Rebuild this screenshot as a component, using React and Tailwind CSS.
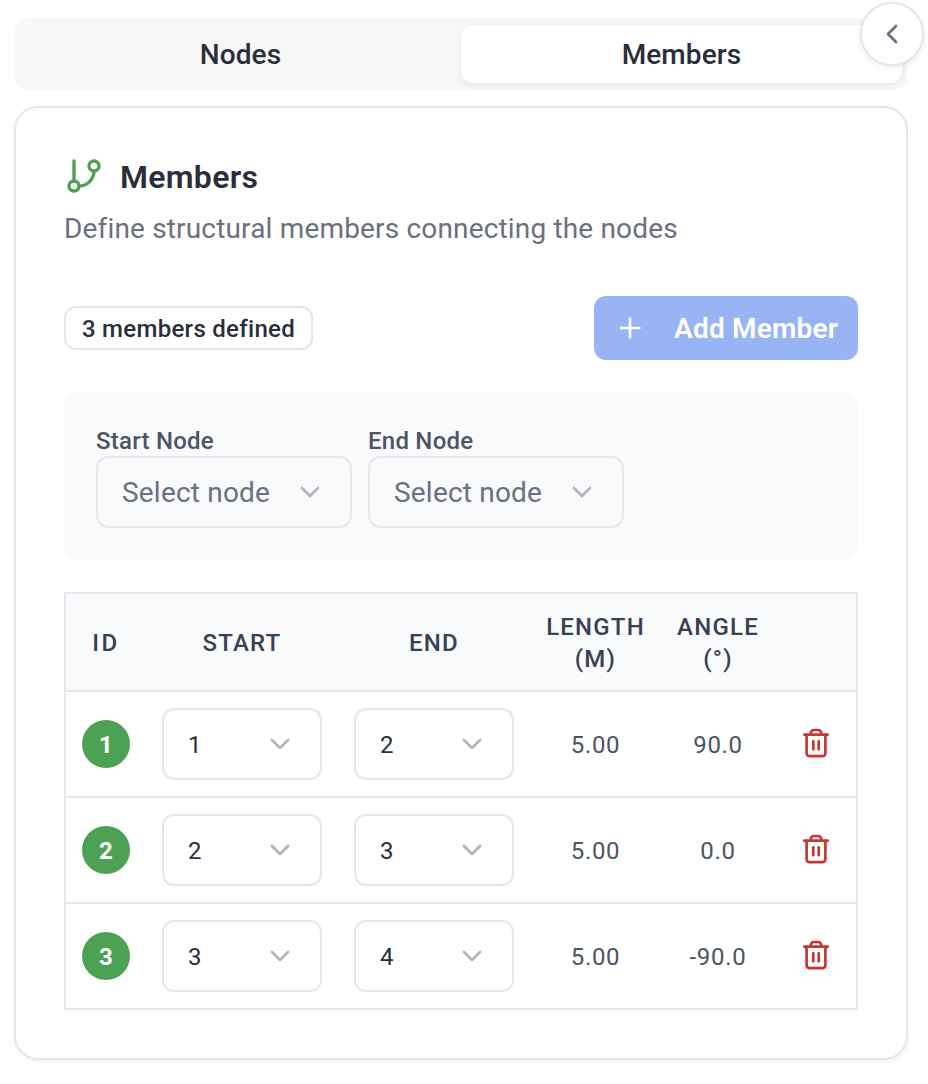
import { ChevronDown, ChevronLeft, GitBranch, Plus } from "lucide-react";

const members = [
  { id: 1, start: 1, end: 2, length: "5.00", angle: "90.0" },
  { id: 2, start: 2, end: 3, length: "5.00", angle: "0.0" },
  { id: 3, start: 3, end: 4, length: "5.00", angle: "-90.0" },
];

function TrashIcon() {
  return (
    <svg className="ml-px" width="32" height="32" viewBox="0 0 32 32" fill="none" stroke="#c93430" strokeWidth="2.67" strokeLinecap="round" strokeLinejoin="round">
      <path d="M4.3 6.7h23.4" />
      <path d="M10.8 6.4V5a3 3 0 0 1 3-3h4.4a3 3 0 0 1 3 3v1.4" />
      <path d="M6.6 7v18.2a3 3 0 0 0 3 3h12.8a3 3 0 0 0 3-3V7" />
      <path d="M13.3 13.3v8M18.7 13.3v8" />
    </svg>
  );
}

function NodeField({ label }) {
  return (
    <div>
      <div className="h-8 pt-px text-[24px] leading-8 font-medium tracking-[0.24px] text-[#4b5563]">{label}</div>
      <div className="flex h-[72px] w-64 items-center justify-between rounded-xl border-2 border-[#e6e7eb] px-6 text-[28px] text-[#6b7080]">
        <span className="pt-0.5 tracking-[0.2px] whitespace-nowrap">Select node</span>
        <ChevronDown size={32} color="#b1b3bd" />
      </div>
    </div>
  );
}

function NodeSelect({ value }) {
  return (
    <div className="flex h-[72px] w-40 items-center justify-between rounded-xl border-2 border-[#e6e7ec] bg-white px-6 text-[24px] text-[#2a2e3b]">
      <span className="pt-0.5">{value}</span>
      <ChevronDown size={32} color="#b1b3bd" />
    </div>
  );
}

export default function App() {
  return (
    <div className="relative h-[1084px] w-[928px] overflow-hidden bg-white pt-[18px] pl-[14px] font-['Roboto',sans-serif] text-[#2a2e3b]">
      <div className="flex h-[72px] w-[894px] rounded-2xl bg-[#f7f7f7] px-[6px] py-[7px] text-[28px] font-medium tracking-[0.1px]">
        <div className="flex flex-1 items-center justify-center pt-0.5">Nodes</div>
        <div className="flex flex-1 items-center justify-center rounded-xl bg-white pt-0.5 shadow-[0_2px_6px_rgba(0,0,0,0.08)]">Members</div>
      </div>

      <button className="absolute top-[2px] left-[860px] flex size-16 items-center justify-center rounded-full border-2 border-[#e6e7ec] bg-white shadow-[0_2px_6px_rgba(0,0,0,0.08)]">
        <ChevronLeft size={32} color="#6b7080" />
      </button>

      <div className="mt-4 h-[954px] w-[894px] rounded-3xl border-2 border-[#e6e7ec] bg-white px-12 pt-12 shadow-[0_2px_4px_rgba(0,0,0,0.05)]">
        <div className="flex h-10 items-center gap-4">
          <GitBranch size={40} color="#4ca154" />
          <h2 className="pt-0.5 text-[32px] font-semibold tracking-[0.28px]">Members</h2>
        </div>
        <p className="mt-[13px] h-10 text-[28px] leading-10 tracking-[0.165px] text-[#6b7080]">Define structural members connecting the nodes</p>

        <div className="mt-[47px] flex h-16 items-center justify-between">
          <div className="flex h-11 w-[249px] items-center justify-center rounded-xl border-2 border-[#e6e7ec] pt-0.5 text-[24px] font-medium tracking-[0.3px] whitespace-nowrap">3 members defined</div>
          <button className="flex h-16 w-[264px] items-center justify-between rounded-xl bg-[#98b4f4] px-5 text-[28px] font-semibold whitespace-nowrap text-white">
            <Plus size={32} />
            <span className="pt-0.5 tracking-[0.2px]">Add Member</span>
          </button>
        </div>

        <div className="mt-8 flex h-[168px] gap-4 rounded-2xl bg-[#f9fafc] p-8">
          <NodeField label="Start Node" />
          <NodeField label="End Node" />
        </div>

        <div className="mt-8 w-[794px] border-2 border-b-0 border-[#e6e7ec]">
          <div className="grid h-[98px] grid-cols-[80px_192px_192px_131px_114px_81px] place-items-center border-b-2 border-[#e6e7ec] bg-[#f9fafc] pt-0.5 text-center text-[24px] leading-8 font-medium tracking-[1.2px] text-[#374151]">
            <div className="tracking-[2.4px]">ID</div>
            <div>START</div>
            <div>END</div>
            <div>LENGTH<br />(M)</div>
            <div>ANGLE<br />(°)</div>
            <div />
          </div>
          {members.map((m) => (
            <div key={m.id} className="grid h-[106px] grid-cols-[80px_192px_192px_131px_114px_81px] place-items-center border-b-2 border-[#e6e7ec] text-[24px] text-[#4b5563]">
              <div className="flex size-12 items-center justify-center rounded-full bg-[#4ca154] pt-0.5 font-bold text-white">{m.id}</div>
              <NodeSelect value={m.start} />
              <NodeSelect value={m.end} />
              <div className="pt-0.5 tracking-[0.7px]">{m.length}</div>
              <div className="pt-0.5 tracking-[0.7px]">{m.angle}</div>
              <TrashIcon />
            </div>
          ))}
        </div>
      </div>
    </div>
  );
}
